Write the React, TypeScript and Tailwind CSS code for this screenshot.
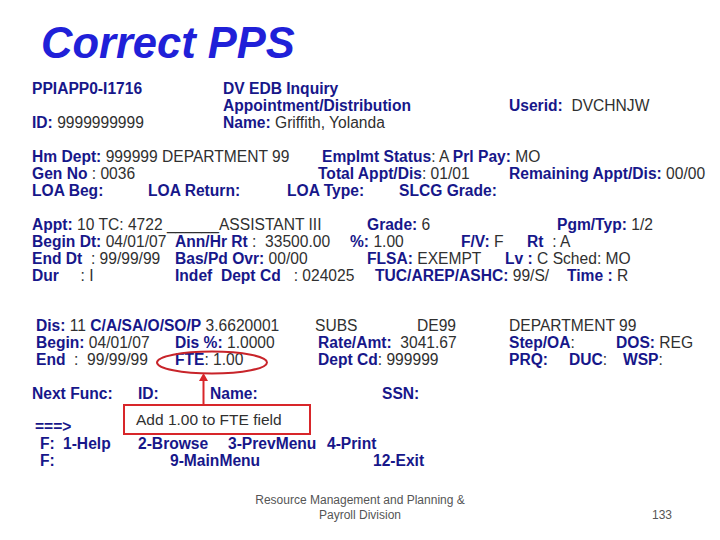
import type { ReactNode } from "react";

function L({ children }: { children: ReactNode }) {
  return <span className="font-bold text-[#17178a]">{children}</span>;
}

function V({ children }: { children: ReactNode }) {
  return <span className="text-[#303030]">{children}</span>;
}

function Row({ children, className = "" }: { children: ReactNode; className?: string }) {
  return <div className={`flex h-[17px] items-center whitespace-pre ${className}`}>{children}</div>;
}

export default function App() {
  return (
    <div className="relative h-[540px] w-[720px] overflow-hidden bg-white font-['Liberation_Sans',Arial,sans-serif] text-[15.6px] leading-[17px]">
      <div className="pt-[21px] pl-[41px]">
        <h1 className="h-[44px] text-[43.5px] font-bold italic leading-[44px] text-[#2020d8]">Correct PPS</h1>
      </div>

      {/* header */}
      <div className="mt-[15px] pl-[32px]">
        <Row>
          <div className="w-[191px]"><L>PPIAPP0-I1716</L></div>
          <L>DV EDB Inquiry</L>
        </Row>
        <Row className="pl-[191px]">
          <div className="w-[286px]"><L>Appointment/Distribution</L></div>
          <L>Userid: </L><V> DVCHNJW</V>
        </Row>
        <Row>
          <div className="w-[191px]"><L>ID:</L><V> 9999999999</V></div>
          <L>Name:</L><V> Griffith, Yolanda</V>
        </Row>
      </div>

      {/* employee */}
      <div className="mt-[17px] pl-[32px]">
        <Row>
          <div className="w-[290px]"><L>Hm Dept:</L><V> 999999 DEPARTMENT 99</V></div>
          <L>Emplmt Status</L><V>: A </V><L>Prl Pay:</L><V> MO</V>
        </Row>
        <Row>
          <div className="w-[286px]"><L>Gen No </L><V>: 0036</V></div>
          <div className="w-[191px]"><L>Total Appt/Dis</L><V>: 01/01</V></div>
          <L>Remaining Appt/Dis:</L><V> 00/00</V>
        </Row>
        <Row>
          <div className="w-[116px]"><L>LOA Beg:</L></div>
          <div className="w-[139px]"><L>LOA Return:</L></div>
          <div className="w-[112px]"><L>LOA Type:</L></div>
          <L>SLCG Grade:</L>
        </Row>
      </div>

      {/* appointment */}
      <div className="mt-[17px] pl-[32px]">
        <Row>
          <div className="w-[335px]"><L>Appt:</L><V> 10 TC: 4722 ______ASSISTANT III</V></div>
          <div className="w-[190px]"><L>Grade:</L><V> 6</V></div>
          <L>Pgm/Typ:</L><V> 1/2</V>
        </Row>
        <Row>
          <div className="w-[143px]"><L>Begin Dt:</L><V> 04/01/07</V></div>
          <div className="w-[175px]"><L>Ann/Hr Rt</L><V> :  33500.00</V></div>
          <div className="w-[111px]"><L>%:</L><V> 1.00</V></div>
          <div className="w-[66px]"><L>F/V:</L><V> F</V></div>
          <L>Rt</L><V>  : A</V>
        </Row>
        <Row>
          <div className="w-[143px]"><L>End Dt</L><V>  : 99/99/99</V></div>
          <div className="w-[192px]"><L>Bas/Pd Ovr:</L><V> 00/00</V></div>
          <div className="w-[138px]"><L>FLSA:</L><V> EXEMPT</V></div>
          <L>Lv :</L><V> C Sched: MO</V>
        </Row>
        <Row>
          <div className="w-[143px]"><L>Dur</L><V>     : I</V></div>
          <div className="w-[200px]"><L>Indef  Dept Cd</L><V>   : 024025</V></div>
          <div className="w-[192px]"><L>TUC/AREP/ASHC:</L><V> 99/S/</V></div>
          <L>Time :</L><V> R</V>
        </Row>
      </div>

      {/* distribution */}
      <div className="mt-[33px] pl-[36px]">
        <Row>
          <div className="w-[279px]"><L>Dis:</L><V> 11 </V><L>C/A/SA/O/SO/P</L><V> 3.6620001</V></div>
          <div className="w-[102px]"><V>SUBS</V></div>
          <div className="w-[92px]"><V>DE99</V></div>
          <V>DEPARTMENT 99</V>
        </Row>
        <Row>
          <div className="w-[139px]"><L>Begin:</L><V> 04/01/07</V></div>
          <div className="w-[143px]"><L>Dis %:</L><V> 1.0000</V></div>
          <div className="w-[191px]"><L>Rate/Amt:</L><V>  3041.67</V></div>
          <div className="w-[107px]"><L>Step/OA</L><V>:</V></div>
          <L>DOS:</L><V> REG</V>
        </Row>
        <Row>
          <div className="w-[139px]"><L>End</L><V>  :  99/99/99</V></div>
          <div className="w-[143px]"><L>FTE</L><V>: 1.00</V></div>
          <div className="w-[191px]"><L>Dept Cd</L><V>: 999999</V></div>
          <div className="w-[60px]"><L>PRQ:</L></div>
          <div className="w-[54px]"><L>DUC</L><V>:</V></div>
          <L>WSP</L><V>:</V>
        </Row>
      </div>

      {/* command area */}
      <div className="mt-[17px] pl-[32px]">
        <Row>
          <div className="w-[106px]"><L>Next Func:</L></div>
          <div className="w-[72px]"><L>ID:</L></div>
          <div className="w-[172px]"><L>Name:</L></div>
          <L>SSN:</L>
        </Row>
      </div>
      <div className="mt-[2px] flex h-[31px] pl-[35px]">
        <div className="flex w-[88px] items-end">
          <span className="font-bold text-[#17178a]">===&gt;</span>
        </div>
        <div className="flex w-[188px] items-center border-2 border-[#d8262a] pl-[11px] text-[15.5px] text-[#303030]">
          Add 1.00 to FTE field
        </div>
      </div>
      <div className="pl-[40px]">
        <Row>
          <div className="w-[23px]"><L>F:</L></div>
          <div className="w-[75px]"><L>1-Help</L></div>
          <div className="w-[90px]"><L>2-Browse</L></div>
          <div className="w-[99px]"><L>3-PrevMenu</L></div>
          <L>4-Print</L>
        </Row>
        <Row>
          <div className="w-[130px]"><L>F:</L></div>
          <div className="w-[203px]"><L>9-MainMenu</L></div>
          <L>12-Exit</L>
        </Row>
      </div>

      {/* footer */}
      <div className="mt-[24px] flex text-[12px] leading-[15px] text-[#555]">
        <div className="w-[720px] text-center">
          <div>Resource Management and Planning &amp;</div>
          <div>Payroll Division</div>
        </div>
      </div>
      <div className="absolute left-[652px] top-[508px] text-[12px] leading-[15px] text-[#555]">133</div>

      {/* annotation */}
      <svg className="pointer-events-none absolute inset-0" width="720" height="540" viewBox="0 0 720 540">
        <ellipse cx="212" cy="362.5" rx="55" ry="11" fill="none" stroke="#c8242a" strokeWidth="2" />
        <line x1="203.5" y1="405" x2="203.5" y2="380" stroke="#d8262a" strokeWidth="2" />
        <polygon points="203.5,373 199,381 208,381" fill="#d8262a" />
      </svg>
    </div>
  );
}
